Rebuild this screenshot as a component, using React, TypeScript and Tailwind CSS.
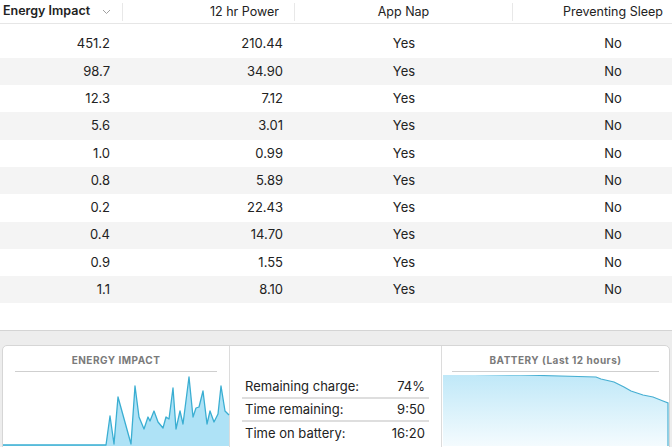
import React from 'react';

const rows = [
  ['451.2', '210.44', 'Yes', 'No'],
  ['98.7', '34.90', 'Yes', 'No'],
  ['12.3', '7.12', 'Yes', 'No'],
  ['5.6', '3.01', 'Yes', 'No'],
  ['1.0', '0.99', 'Yes', 'No'],
  ['0.8', '5.89', 'Yes', 'No'],
  ['0.2', '22.43', 'Yes', 'No'],
  ['0.4', '14.70', 'Yes', 'No'],
  ['0.9', '1.55', 'Yes', 'No'],
  ['1.1', '8.10', 'Yes', 'No'],
];

// energy impact samples, page coordinates
const energyPts: [number, number][] = [
  [2, 446], [105, 446], [109, 417], [113, 445], [117, 398], [130, 445], [134, 387], [138, 418],
  [143, 430], [147, 418], [149, 422], [153, 412], [157, 423], [162, 429], [165, 418], [168, 420],
  [172, 389], [175, 430], [179, 412], [182, 425], [188, 378], [192, 418], [195, 409], [198, 408],
  [202, 392], [206, 425], [209, 412], [213, 423], [217, 415], [220, 387], [224, 412], [228, 416],
];

const batteryPts: [number, number][] = [
  [442, 375], [520, 376], [595, 378], [600, 380], [613, 383], [623, 388], [630, 392],
  [642, 396], [652, 398], [662, 402], [667, 404],
];

const toLine = (pts: [number, number][]) => pts.map((p) => `${p[0]},${p[1]}`).join(' ');

const stats = [
  ['Remaining charge:', '74%'],
  ['Time remaining:', '9:50'],
  ['Time on battery:', '16:20'],
];

export default function App() {
  return (
    <div
      className="w-[672px] h-[447px] overflow-hidden bg-white text-[#222] flex flex-col"
      style={{ fontFamily: 'Inter, "Liberation Sans", sans-serif' }}
    >
      {/* header */}
      <div className="h-[24px] flex items-center border-b border-[#e6e6e6] text-[12.5px] shrink-0 w-[713px]">
        <div className="w-[123px] flex items-center pl-[3px] border-r border-[#e8e8e8] h-[18px]">
          <span className="font-semibold">Energy Impact</span>
          <svg width="9" height="6" viewBox="0 0 9 6" className="ml-auto mr-[11px]">
            <path d="M1 1 L4.5 4.5 L8 1" fill="none" stroke="#a0a0a0" strokeWidth="1" />
          </svg>
        </div>
        <div className="w-[172px] text-right pr-[15px] border-r border-[#e8e8e8] h-[18px] leading-[18px]">
          12 hr Power
        </div>
        <div className="w-[218px] text-center border-r border-[#e8e8e8] h-[18px] leading-[18px]">App Nap</div>
        <div className="w-[200px] text-center h-[18px] leading-[18px]">Preventing Sleep</div>
      </div>

      {/* rows */}
      <div className="pt-[6.5px] h-[307px] shrink-0 border-b border-[#d4d4d4]">
        {rows.map((r, i) => (
          <div
            key={i}
            className={`h-[27.3px] flex items-center text-[13px] w-[713px] ${i % 2 === 1 ? 'bg-[#f4f4f4]' : 'bg-white'}`}
          >
            <div className="w-[123px] text-right pr-[13px]">{r[0]}</div>
            <div className="w-[172px] text-right pr-[12px]">{r[1]}</div>
            <div className="w-[218px] text-center">{r[2]}</div>
            <div className="w-[200px] text-center">{r[3]}</div>
          </div>
        ))}
      </div>

      {/* bottom panel */}
      <div className="flex-1 bg-[#ededed] pt-[14px] pl-[2px]">
        <div className="w-[668px] h-[120px] bg-white border border-[#d6d6d6] rounded-t-[5px] flex overflow-hidden">
          {/* energy impact */}
          <div className="w-[227px] flex flex-col border-r border-[#dcdcdc]">
            <div className="h-[26px] pt-[3px] mx-[12px] border-b border-[#cfcfcf] flex items-center justify-center text-[10px] font-bold tracking-[0.5px] text-[#7a7a7a]">
              ENERGY IMPACT
            </div>
            <svg width="227" height="71" viewBox="2 376 227 71" className="mt-[3px]">
              <polygon points={`${toLine(energyPts)} 228,447 2,447`} fill="#aee2f6" />
              <polyline points={toLine(energyPts)} fill="none" stroke="#3aaed2" strokeWidth="1.3" strokeLinejoin="round" />
            </svg>
          </div>

          {/* stats */}
          <div className="w-[212px] flex flex-col border-r border-[#dcdcdc] pt-[30px] px-[12px]">
            {stats.map((s, i) => (
              <div
                key={i}
                className={`h-[23px] flex items-center justify-between text-[13px] pl-[3px] pr-[4px] ${i < 2 ? 'border-b-2 border-[#dedede]' : ''}`}
              >
                <span>{s[0]}</span>
                <span>{s[1]}</span>
              </div>
            ))}
          </div>

          {/* battery */}
          <div className="flex-1 flex flex-col">
            <div className="h-[26px] pt-[3px] mx-[10px] border-b border-[#cfcfcf] flex items-center justify-center text-[10px] font-bold tracking-[0.5px] text-[#7a7a7a]">
              BATTERY (Last 12 hours)
            </div>
            <svg width="227" height="71" viewBox="441 376 227 71" className="mt-[3px]">
              <defs>
                <linearGradient id="batt" x1="0" y1="0" x2="0" y2="1">
                  <stop offset="0" stopColor="#bfe8f8" />
                  <stop offset="1" stopColor="#f4fbfe" />
                </linearGradient>
              </defs>
              <polygon points={`${toLine(batteryPts)} 667,447 442,447`} fill="url(#batt)" />
              <polyline points={`${toLine(batteryPts)} 667,447`} fill="none" stroke="#47afd2" strokeWidth="1.2" />
            </svg>
          </div>
        </div>
      </div>
    </div>
  );
}
